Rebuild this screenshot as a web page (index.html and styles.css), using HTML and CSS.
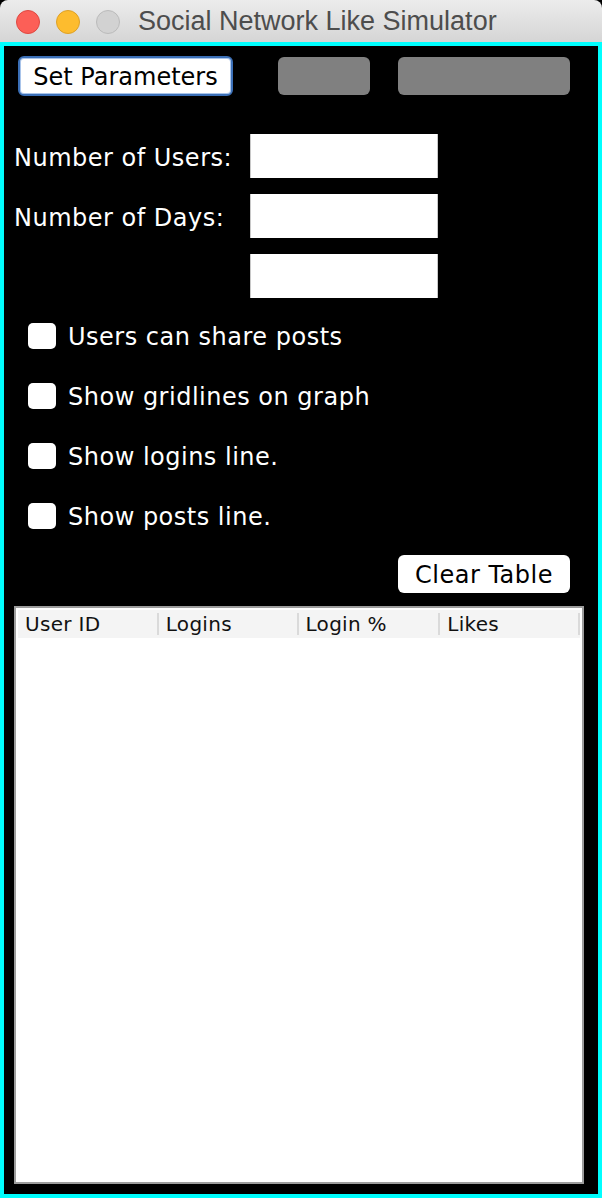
FILE: index.html
```html
<!DOCTYPE html>
<html lang="en">

<head>
    <meta charset="UTF-8">
    <meta name="viewport" content="width=device-width, initial-scale=1.0">
    <title>Social Network Like Simulator</title>
    <link rel="stylesheet" href="styles.css">
</head>

<body>
    <div class="window">
        <div class="titlebar">
            <div class="lights">
                <span class="light red"></span>
                <span class="light yellow"></span>
                <span class="light gray"></span>
            </div>
            <div class="title">Social Network Like Simulator</div>
        </div>

        <div class="content">
            <div class="toolbar">
                <button class="btn btn-focus">Set Parameters</button>
                <button class="btn btn-disabled btn-small"></button>
                <button class="btn btn-disabled btn-wide"></button>
            </div>

            <div class="form-grid">
                <label class="form-label">Number of Users:</label>
                <input class="text-field" type="text">
                <label class="form-label">Number of Days:</label>
                <input class="text-field" type="text">
                <span class="form-label"></span>
                <input class="text-field" type="text">
            </div>

            <div class="checks">
                <label class="check-row"><span class="check-box"></span>Users can share posts</label>
                <label class="check-row"><span class="check-box"></span>Show gridlines on graph</label>
                <label class="check-row"><span class="check-box"></span>Show logins line.</label>
                <label class="check-row"><span class="check-box"></span>Show posts line.</label>
            </div>

            <div class="clear-row">
                <button class="btn btn-clear">Clear Table</button>
            </div>

            <div class="table">
                <div class="table-header">
                    <div class="th th-1">User ID</div>
                    <div class="th th-2">Logins</div>
                    <div class="th th-3">Login %</div>
                    <div class="th th-4">Likes</div>
                </div>
                <div class="table-body"></div>
            </div>
        </div>
    </div>
</body>

</html>
```

FILE: styles.css
```css
* {
    box-sizing: border-box;
}

body {
    margin: 0;
    background-color: #000;
    font-family: "DejaVu Sans", sans-serif;
}

.window {
    width: 602px;
    height: 1198px;
    display: flex;
    flex-direction: column;
}

.titlebar {
    height: 42px;
    display: flex;
    align-items: center;
    background: linear-gradient(#ececec, #d5d5d5);
    border-radius: 8px 8px 0 0;
}

.lights {
    display: flex;
    gap: 16px;
    margin-left: 16px;
    margin-top: 1px;
}

.light {
    width: 24px;
    height: 24px;
    border-radius: 50%;
}

.red {
    background-color: #fc5f57;
    border: 1px solid #df4841;
}

.yellow {
    background-color: #fdbc2e;
    border: 1px solid #dea126;
}

.gray {
    background-color: #d2d2d2;
    border: 1px solid #bbbbbb;
}

.title {
    margin-left: 18px;
    margin-top: 1px;
    font-family: "Liberation Sans", Arial, sans-serif;
    font-size: 27px;
    color: #4d4d4d;
}

.content {
    flex: 1;
    display: flex;
    flex-direction: column;
    background-color: #000;
    border: 4px solid #00ffff;
    padding: 10px 14px 10px 10px;
}

.toolbar {
    display: flex;
    align-items: center;
    padding-left: 4px;
}

.btn {
    font-family: "DejaVu Sans", sans-serif;
    font-size: 24px;
    color: #000;
    background-color: #fff;
    border: none;
    border-radius: 6px;
    padding: 2px 0 0;
}

.btn-focus {
    width: 215px;
    height: 40px;
    border: 2px solid #3b6fb6;
    box-shadow: inset 0 0 0 1px #a9c4ea;
}

.btn-disabled {
    height: 38px;
    background-color: #808080;
}

.btn-small {
    width: 92px;
    margin-left: 45px;
}

.btn-wide {
    width: 172px;
    margin-left: 28px;
}

.form-grid {
    display: grid;
    grid-template-columns: 236px 188px;
    grid-auto-rows: 44px;
    row-gap: 16px;
    margin-top: 38px;
    align-items: center;
}

.form-label {
    color: #fff;
    font-size: 24px;
    letter-spacing: 0.5px;
    padding-top: 3px;
}

.text-field {
    height: 44px;
    width: 188px;
    background-color: #fff;
    border: none;
    border-left: 1px solid #c8c8c8;
    border-right: 1px solid #c8c8c8;
    outline: none;
}

.checks {
    display: flex;
    flex-direction: column;
    margin-top: 8px;
    padding-left: 14px;
}

.check-row {
    height: 60px;
    display: flex;
    align-items: center;
    gap: 12px;
    color: #fff;
    font-size: 24px;
    letter-spacing: 0.5px;
    padding-top: 2px;
}

.check-box {
    width: 28px;
    height: 26px;
    margin-top: -2px;
    background-color: #fff;
    border-radius: 5px;
}

.clear-row {
    display: flex;
    justify-content: flex-end;
    margin-top: 9px;
    padding-right: 14px;
}

.btn-clear {
    width: 172px;
    height: 38px;
    letter-spacing: 0.5px;
}

.table {
    margin-top: 13px;
    height: 578px;
    display: flex;
    flex-direction: column;
    background-color: #fff;
    border: 2px solid #9d9d9d;
    padding: 2px;
}

.table-header {
    display: flex;
    height: 28px;
    padding: 3px 0;
    background-color: #f4f4f4;
}

.th {
    height: 22px;
    line-height: 22px;
    font-size: 20px;
    letter-spacing: 0.3px;
    color: #111;
    padding-left: 7px;
    border-right: 2px solid #dadada;
}

.th-1 {
    width: 141px;
}

.th-2 {
    width: 140px;
}

.th-3 {
    width: 142px;
}

.th-4 {
    width: 140px;
}

.table-body {
    flex: 1;
    background-color: #fff;
}
```
